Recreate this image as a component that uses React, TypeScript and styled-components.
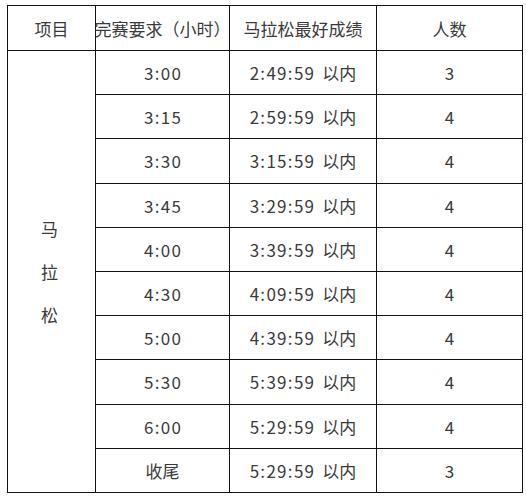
import React from 'react';
import styled, { createGlobalStyle } from 'styled-components';

const GlobalStyle = createGlobalStyle`
    html, body {
        margin: 0;
        padding: 0;
        background: #ffffff;
    }
    body {
        font-family: "Noto Sans CJK SC", "DejaVu Sans", sans-serif;
        color: #333333;
    }
`;

const Page = styled.div`
    padding: 5px 0 0 7px;
`;

const Table = styled.div`
    display: grid;
    grid-template-columns: 88px 134px 147px 146px;
    grid-template-rows: 45px repeat(10, 44.2px);
    width: max-content;
    border-top: 1px solid #111;
    border-left: 1px solid #111;
`;

const Cell = styled.div<{ $span?: number }>`
    box-sizing: border-box;
    display: flex;
    align-items: center;
    justify-content: center;
    border-right: 1px solid #111;
    border-bottom: 1px solid #111;
    font-size: 17px;
    line-height: 1;
    white-space: nowrap;
    color: #3a3a3a;
    ${(p) => (p.$span ? `grid-row: span ${p.$span};` : '')}
`;

// spaced-out figures, like the half-width digits of the original table
const Num = styled.span<{ $gap?: boolean }>`
    letter-spacing: 1.3px;
    margin-right: ${(p) => (p.$gap ? '7px' : '-1.3px')};
`;

const VerticalLabel = styled.div`
    display: flex;
    flex-direction: column;
    align-items: center;
    gap: 26px;
    margin-left: -4px;
`;

const rows = [
    ['3:00', '2:49:59', '3'],
    ['3:15', '2:59:59', '4'],
    ['3:30', '3:15:59', '4'],
    ['3:45', '3:29:59', '4'],
    ['4:00', '3:39:59', '4'],
    ['4:30', '4:09:59', '4'],
    ['5:00', '4:39:59', '4'],
    ['5:30', '5:39:59', '4'],
    ['6:00', '5:29:59', '4'],
    ['收尾', '5:29:59', '3'],
];

const App = () => {
    return (
        <>
            <GlobalStyle />
            <Page>
                <Table>
                    <Cell>项目</Cell>
                    <Cell>完赛要求（小时）</Cell>
                    <Cell>马拉松最好成绩</Cell>
                    <Cell>人数</Cell>
                    <Cell $span={10}>
                        <VerticalLabel>
                            <span>马</span>
                            <span>拉</span>
                            <span>松</span>
                        </VerticalLabel>
                    </Cell>
                    {rows.map(([time, best, count], i) => (
                        <React.Fragment key={i}>
                            <Cell>{/\d/.test(time) ? <Num>{time}</Num> : time}</Cell>
                            <Cell>
                                <span>
                                    <Num $gap>{best}</Num>以内
                                </span>
                            </Cell>
                            <Cell><Num>{count}</Num></Cell>
                        </React.Fragment>
                    ))}
                </Table>
            </Page>
        </>
    );
};

export default App;
